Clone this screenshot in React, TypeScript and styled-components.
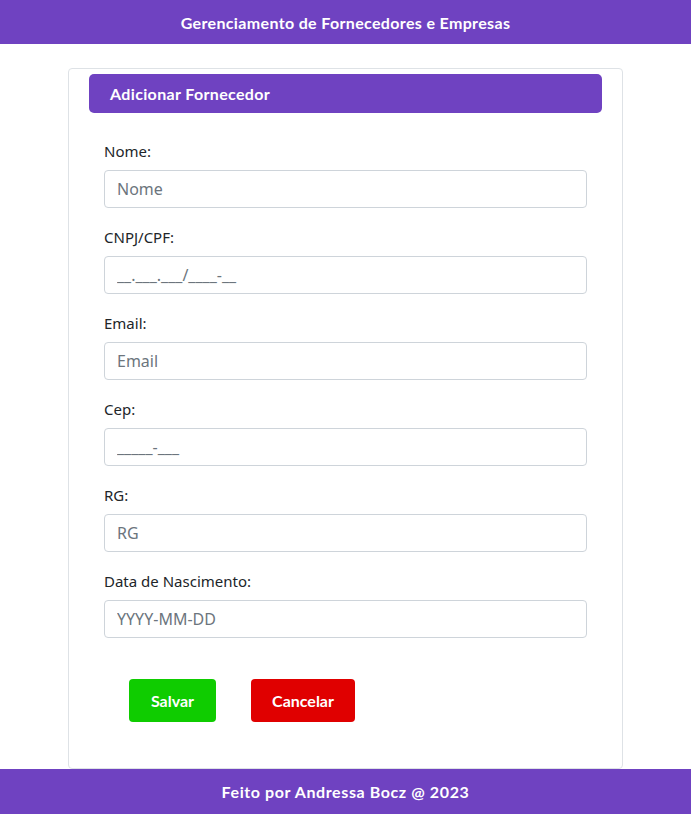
import React from "react";
import styled, { createGlobalStyle } from "styled-components";

const Global = createGlobalStyle`
  * { box-sizing: border-box; }
  html, body { margin: 0; padding: 0; background: #fff; }
  body { font-family: "Segoe UI", "Noto Sans", "Open Sans", sans-serif; color: #212529; }
`;

const fun = `"Comic Sans MS", "Lato", sans-serif`;

const Page = styled.div`
  min-height: 814px;
  display: flex;
  flex-direction: column;
`;

const TopBar = styled.header`
  height: 44px;
  background: #6f42c1;
  color: #fff;
  display: flex;
  align-items: center;
  justify-content: center;
  font-family: ${fun};
  font-weight: 700;
  font-size: 16px;
  letter-spacing: 0.35px;
`;

const Main = styled.main`
  flex: 1;
  display: flex;
  justify-content: center;
  padding-top: 24px;
`;

const Card = styled.section`
  width: 555px;
  border: 1px solid #dee2e6;
  border-radius: 4px;
  padding: 5px 20px 46px;
`;

const CardTitle = styled.div`
  height: 39px;
  background: #6f42c1;
  border-radius: 5px;
  color: #fff;
  font-family: ${fun};
  font-weight: 700;
  font-size: 16px;
  display: flex;
  align-items: center;
  padding-left: 21px;
  letter-spacing: 0.35px;
`;

const Form = styled.form`
  padding: 26px 15px 0;
  display: flex;
  flex-direction: column;
`;

const Field = styled.div`
  display: flex;
  flex-direction: column;
  gap: 7px;
  margin-bottom: 17px;
`;

const Label = styled.label`
  font-size: 15px;
  line-height: 24px;
  color: #212529;
`;

const Input = styled.input`
  height: 38px;
  width: 100%;
  border: 1px solid #ced4da;
  border-radius: 4px;
  padding: 0 12px;
  font-family: inherit;
  font-size: 16px;
  color: #212529;
  background: #fff;
  outline: none;
  &::placeholder { color: #6c757d; opacity: 1; }
`;

const Actions = styled.div`
  display: flex;
  gap: 35px;
  padding-left: 25px;
  margin-top: 24px;
`;

const Button = styled.button<{ $tone: "green" | "red"; $w: number }>`
  height: 43px;
  width: ${(p) => p.$w}px;
  border: none;
  border-radius: 4px;
  background: ${(p) => (p.$tone === "green" ? "#0fcc00" : "#e00000")};
  color: #fff;
  font-family: ${fun};
  font-weight: 700;
  font-size: 16px;
  cursor: pointer;
`;

const Footer = styled.footer`
  height: 45px;
  background: #6f42c1;
  color: #fff;
  display: flex;
  align-items: center;
  justify-content: center;
  font-family: ${fun};
  font-weight: 700;
  font-size: 16px;
  letter-spacing: 0.6px;
`;

const fields = [
  { label: "Nome:", ph: "Nome" },
  { label: "CNPJ/CPF:", ph: "__.___.___/____-__" },
  { label: "Email:", ph: "Email" },
  { label: "Cep:", ph: "_____-___" },
  { label: "RG:", ph: "RG" },
  { label: "Data de Nascimento:", ph: "YYYY-MM-DD" },
];

export default function App() {
  return (
    <Page>
      <Global />
      <TopBar>Gerenciamento de Fornecedores e Empresas</TopBar>
      <Main>
        <Card>
          <CardTitle>Adicionar Fornecedor</CardTitle>
          <Form onSubmit={(e) => e.preventDefault()}>
            {fields.map((f, i) => (
              <Field key={i}>
                <Label htmlFor={`f${i}`}>{f.label}</Label>
                <Input id={`f${i}`} placeholder={f.ph} />
              </Field>
            ))}
            <Actions>
              <Button type="submit" $tone="green" $w={87}>Salvar</Button>
              <Button type="button" $tone="red" $w={104}>Cancelar</Button>
            </Actions>
          </Form>
        </Card>
      </Main>
      <Footer>Feito por Andressa Bocz @ 2023</Footer>
    </Page>
  );
}
